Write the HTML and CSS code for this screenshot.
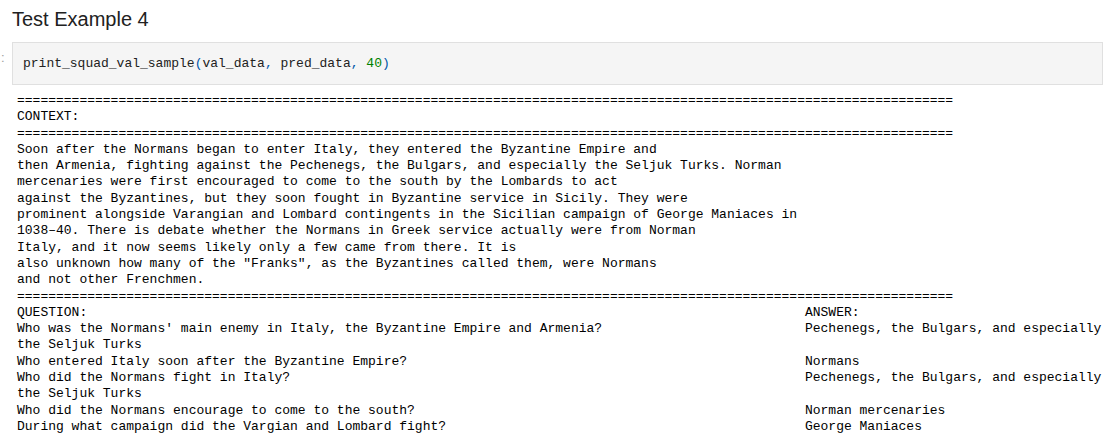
FILE: index.html
```html
<!DOCTYPE html>
<html>
<head>
<meta charset="utf-8">
<link rel="stylesheet" href="styles.css">
</head>
<body>
<div class="nb">
  <h2 class="title">Test Example 4</h2>
  <div class="cell">
    <div class="prompt">:</div>
    <div class="code"><span class="n">print_squad_val_sample</span><span class="p">(</span><span class="n">val_data</span><span class="p">,</span> <span class="n">pred_data</span><span class="p">,</span> <span class="num">40</span><span class="p">)</span></div>
  </div>
  <pre class="out">========================================================================================================================
CONTEXT:
========================================================================================================================
Soon after the Normans began to enter Italy, they entered the Byzantine Empire and
then Armenia, fighting against the Pechenegs, the Bulgars, and especially the Seljuk Turks. Norman
mercenaries were first encouraged to come to the south by the Lombards to act
against the Byzantines, but they soon fought in Byzantine service in Sicily. They were
prominent alongside Varangian and Lombard contingents in the Sicilian campaign of George Maniaces in
1038–40. There is debate whether the Normans in Greek service actually were from Norman
Italy, and it now seems likely only a few came from there. It is
also unknown how many of the "Franks", as the Byzantines called them, were Normans
and not other Frenchmen.
========================================================================================================================
QUESTION:                                                                                            ANSWER:
Who was the Normans' main enemy in Italy, the Byzantine Empire and Armenia?                          Pechenegs, the Bulgars, and especially
the Seljuk Turks
Who entered Italy soon after the Byzantine Empire?                                                   Normans
Who did the Normans fight in Italy?                                                                  Pechenegs, the Bulgars, and especially
the Seljuk Turks
Who did the Normans encourage to come to the south?                                                  Norman mercenaries
During what campaign did the Vargian and Lombard fight?                                              George Maniaces</pre>
</div>
</body>
</html>
```
FILE: styles.css
```css
html, body {
  margin: 0;
  padding: 0;
  background: #ffffff;
}
.nb {
  width: 1120px;
  height: 440px;
  overflow: hidden;
}
.title {
  margin: 0;
  padding: 7px 0 0 12px;
  height: 35px;
  box-sizing: border-box;
  font-family: "Liberation Sans", Arial, sans-serif;
  font-weight: normal;
  font-size: 20px;
  line-height: 24px;
  color: #212121;
}
.cell {
  position: relative;
  margin-left: 12px;
  margin-top: 7px;
  width: 1091px;
  height: 43px;
  box-sizing: border-box;
  border: 1px solid #e0e0e0;
  background: #f5f5f5;
  display: flex;
  align-items: center;
}
.prompt {
  position: absolute;
  left: -12px;
  top: 7px;
  font-family: "Liberation Sans", Arial, sans-serif;
  font-size: 13px;
  color: #9e9e9e;
}
.code {
  padding-left: 10px;
  padding-top: 1px;
  font-family: "Liberation Mono", "Courier New", monospace;
  font-size: 13px;
  line-height: 16px;
  color: #212121;
  white-space: pre;
}
.code .p { color: #0055aa; }
.code .num { color: #008000; }
.out {
  margin: 8px 0 0 17px;
  font-family: "Liberation Mono", "Courier New", monospace;
  font-size: 13px;
  line-height: 16.3px;
  color: #000000;
  white-space: pre;
}
```
